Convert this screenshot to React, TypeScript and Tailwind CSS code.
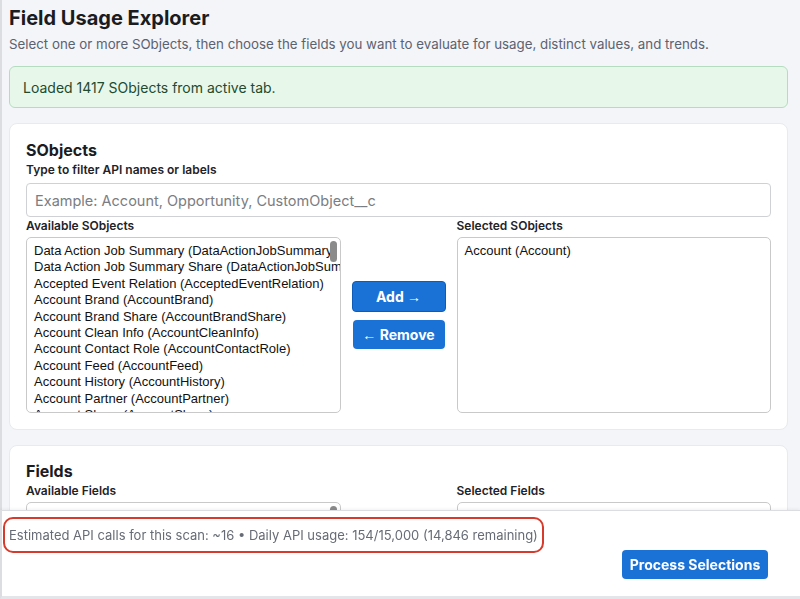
import React from 'react';

const sobjects = [
  'Data Action Job Summary (DataActionJobSummary)',
  'Data Action Job Summary Share (DataActionJobSummaryShare)',
  'Accepted Event Relation (AcceptedEventRelation)',
  'Account Brand (AccountBrand)',
  'Account Brand Share (AccountBrandShare)',
  'Account Clean Info (AccountCleanInfo)',
  'Account Contact Role (AccountContactRole)',
  'Account Feed (AccountFeed)',
  'Account History (AccountHistory)',
  'Account Partner (AccountPartner)',
  'Account Share (AccountShare)',
  'Account Team Member (AccountTeamMember)',
];

function ListBox({ items, scroll }: { items: string[]; scroll?: boolean }) {
  return (
    <div className="relative h-[176px] overflow-hidden rounded-[5px] border border-[#c9c9c9] bg-white pl-[7px] pt-[5px] font-['Liberation_Sans',Arial,sans-serif] text-[13px] leading-[16.4px] text-[#111]">
      {items.map((item) => (
        <div key={item} className="whitespace-nowrap">
          {item}
        </div>
      ))}
      {scroll && (
        <div className="absolute right-[3px] top-[3px] h-[21px] w-[7px] rounded-full bg-[#8b8b8b]" />
      )}
    </div>
  );
}

function Label({ children, tight }: { children: React.ReactNode; tight?: boolean }) {
  return (
    <div className={`${tight ? 'mb-[4px]' : 'mb-[6px]'} text-[12px] font-semibold leading-[14px] text-[#1f2328]`}>
      {children}
    </div>
  );
}

const arrow = "font-['Liberation_Sans',Arial,sans-serif] font-normal";

export default function App() {
  return (
    <div className="relative min-h-screen border-l-2 border-[#dcdde0] bg-[#f4f5f8] font-['Inter',sans-serif] text-[#1c1e21]">
      <div className="px-[7px] pt-[3px] pb-[120px] pr-[12px]">
        {/* Header */}
        <h1 className="text-[20px] font-bold leading-[30px] text-[#1a1c1f]">Field Usage Explorer</h1>
        <p className="mt-[2px] text-[13.3px] leading-[18px] text-[#5b6270]">
          Select one or more SObjects, then choose the fields you want to evaluate for usage, distinct values, and trends.
        </p>

        {/* Status */}
        <div className="mt-[13px] flex h-[42px] items-center rounded-[6px] border border-[#b5dcc0] bg-[#e7f8ea] px-[13px] text-[14px] text-[#234a2f]">
          Loaded 1417 SObjects from active tab.
        </div>

        {/* SObjects card */}
        <section className="mt-[15px] rounded-[8px] border border-[#e9eaee] bg-white px-[16px] pt-[15px] pb-[16px]">
          <h2 className="text-[16px] font-bold leading-[22px] text-[#1a1c1f]">SObjects</h2>
          <div className="mt-[2px]">
            <Label>Type to filter API names or labels</Label>
          </div>
          <input
            className="h-[34px] w-full rounded-[4px] border border-[#cfd1d4] px-[8px] text-[14.5px] text-[#333] placeholder:text-[#7a7d82] outline-none"
            placeholder="Example: Account, Opportunity, CustomObject__c"
          />
          <div className="mt-[2px] grid grid-cols-[minmax(0,1fr)_94px_minmax(0,1fr)] gap-x-[11px]">
            <div className="min-w-0">
              <Label tight>Available SObjects</Label>
              <ListBox items={sobjects} scroll />
            </div>
            <div className="flex flex-col justify-center gap-[8px] pb-[2px]">
              <button className="h-[31px] w-full rounded-[4px] border border-[#0f5cb8] bg-[#1b72d6] text-[14px] font-bold text-white">
                Add <span className={arrow}>→</span>
              </button>
              <button className="mx-[1px] h-[29px] rounded-[4px] bg-[#1b72d6] text-[14px] font-bold text-white">
                <span className={arrow}>←</span> Remove
              </button>
            </div>
            <div className="min-w-0">
              <Label tight>Selected SObjects</Label>
              <ListBox items={['Account (Account)']} />
            </div>
          </div>
        </section>

        {/* Fields card */}
        <section className="mt-[15px] rounded-[8px] border border-[#e9eaee] bg-white px-[16px] pt-[14px] pb-[16px]">
          <h2 className="text-[16px] font-bold leading-[22px] text-[#1a1c1f]">Fields</h2>
          <div className="mt-[2px] grid grid-cols-[minmax(0,1fr)_94px_minmax(0,1fr)] gap-x-[11px]">
            <div className="min-w-0">
              <Label tight>Available Fields</Label>
              <ListBox items={[]} scroll />
            </div>
            <div />
            <div className="min-w-0">
              <Label tight>Selected Fields</Label>
              <ListBox items={[]} />
            </div>
          </div>
        </section>
      </div>

      {/* Sticky footer */}
      <footer className="fixed bottom-0 left-0 right-0 h-[89px] border-b-[3px] border-l-2 border-t border-b-[#e4e5e8] border-l-[#dcdde0] border-t-[#dcdde0] bg-white shadow-[0_-1px_3px_rgba(0,0,0,0.06)]">
        <div className="flex h-full flex-col pl-[1px] pr-[32px] pt-[6px]">
          <div className="self-start rounded-[10px] border-2 border-[#d63b2c] px-[4px] py-[8px] text-[13px] leading-[16px] text-[#666b75]">
            Estimated API calls for this scan: ~16 • Daily API usage: 154/15,000 (14,846 remaining)
          </div>
          <div className="flex flex-1 items-start justify-end">
            <button className="-mt-[3px] h-[29px] w-[146px] rounded-[4px] bg-[#1b72d6] text-[14px] font-bold text-white">
              Process Selections
            </button>
          </div>
        </div>
      </footer>
    </div>
  );
}
